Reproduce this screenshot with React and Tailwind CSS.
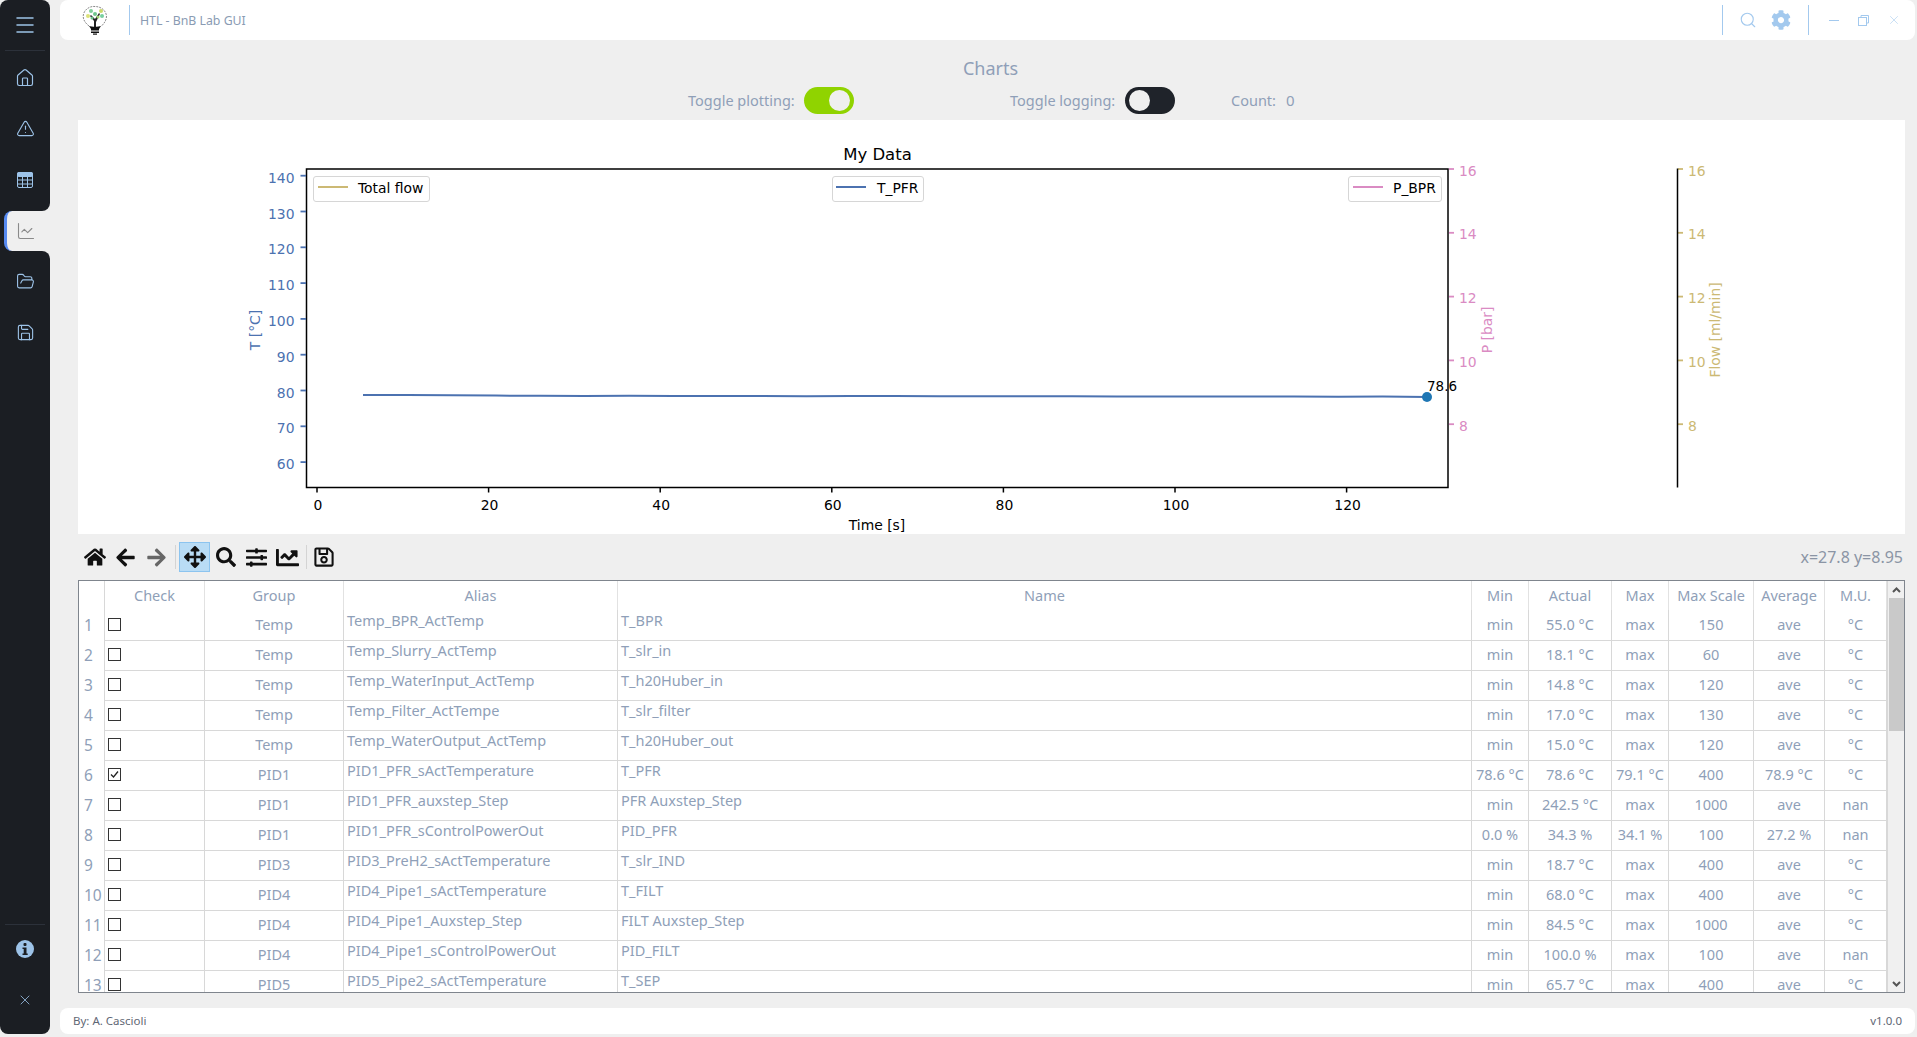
import React from 'react';
import { FaHome, FaArrowLeft, FaArrowRight, FaArrowsAlt, FaSearch, FaSlidersH, FaChartLine, FaRegSave, FaCog } from 'react-icons/fa';
import { Menu, Home, TriangleAlert, ChartLine, FolderOpen, Save, X, Search } from 'lucide-react';

const rows = [
  ['Temp', 'Temp_BPR_ActTemp', 'T_BPR', 'min', '55.0 °C', 'max', '150', 'ave', '°C'],
  ['Temp', 'Temp_Slurry_ActTemp', 'T_slr_in', 'min', '18.1 °C', 'max', '60', 'ave', '°C'],
  ['Temp', 'Temp_WaterInput_ActTemp', 'T_h20Huber_in', 'min', '14.8 °C', 'max', '120', 'ave', '°C'],
  ['Temp', 'Temp_Filter_ActTempe', 'T_slr_filter', 'min', '17.0 °C', 'max', '130', 'ave', '°C'],
  ['Temp', 'Temp_WaterOutput_ActTemp', 'T_h20Huber_out', 'min', '15.0 °C', 'max', '120', 'ave', '°C'],
  ['PID1', 'PID1_PFR_sActTemperature', 'T_PFR', '78.6 °C', '78.6 °C', '79.1 °C', '400', '78.9 °C', '°C'],
  ['PID1', 'PID1_PFR_auxstep_Step', 'PFR Auxstep_Step', 'min', '242.5 °C', 'max', '1000', 'ave', 'nan'],
  ['PID1', 'PID1_PFR_sControlPowerOut', 'PID_PFR', '0.0 %', '34.3 %', '34.1 %', '100', '27.2 %', 'nan'],
  ['PID3', 'PID3_PreH2_sActTemperature', 'T_slr_IND', 'min', '18.7 °C', 'max', '400', 'ave', '°C'],
  ['PID4', 'PID4_Pipe1_sActTemperature', 'T_FILT', 'min', '68.0 °C', 'max', '400', 'ave', '°C'],
  ['PID4', 'PID4_Pipe1_Auxstep_Step', 'FILT Auxstep_Step', 'min', '84.5 °C', 'max', '1000', 'ave', '°C'],
  ['PID4', 'PID4_Pipe1_sControlPowerOut', 'PID_FILT', 'min', '100.0 %', 'max', '100', 'ave', 'nan'],
  ['PID5', 'PID5_Pipe2_sActTemperature', 'T_SEP', 'min', '65.7 °C', 'max', '400', 'ave', '°C'],
];

const headers = ['', 'Check', 'Group', 'Alias', 'Name', 'Min', 'Actual', 'Max', 'Max Scale', 'Average', 'M.U.'];
const gridCols = 'grid grid-cols-[26px_100px_139px_274px_854px_57px_83px_57px_85px_71px_62px]';
const cell = 'flex items-center justify-center border-r border-[#d8d8d8] border-b whitespace-nowrap';

const BLUE = '#4c72b0';
const PINK = '#da8bc3';
const GOLD = '#ccb974';

const TableIcon = () => (
  <svg width="16" height="16" viewBox="0 0 16 16" fill="none" stroke="#9dc3e8" strokeWidth="1">
    <rect x="0.5" y="0.5" width="15" height="15" rx="1.5" />
    <rect x="0.5" y="0.5" width="15" height="4" rx="1" fill="#9dc3e8" />
    <path d="M0.5 8h15M0.5 12h15M5.5 4.5v11M10.5 4.5v11" />
  </svg>
);

const Logo = () => (
  <svg width="28" height="30" viewBox="0 0 28 30">
    <path d="M8 21C3 17 1.500 13 2.500 9 4 4 9 1 14 1.500c6 0 11 4 11.500 9.500 0 4-2 7-5 10" fill="none" stroke="#8a8a8a" strokeWidth="1" strokeDasharray="2 1" />
    <path d="M13 23v-7l-4-5 1-1 4 4 4-6 1 1-4 8v6z" fill="#222" />
    <path d="M8 21c3 1 9 1 12 0l-2 3h-8z" fill="#111" />
    <rect x="10" y="24" width="8" height="1.500" fill="#111" />
    <rect x="10" y="26.500" width="8" height="1.500" fill="#111" />
    <rect x="12" y="28.500" width="4" height="1.200" fill="#111" />
    <circle cx="10" cy="6" r="2" fill="#7fcf9a" />
    <circle cx="14" cy="9" r="2" fill="#6fc48c" />
    <circle cx="20" cy="6" r="2" fill="#cbd96a" />
    <circle cx="7" cy="11" r="2" fill="#dbe27a" />
    <circle cx="21" cy="11" r="2" fill="#78cfa0" />
    <circle cx="17" cy="12" r="1.500" fill="#9fd66f" />
    <circle cx="11" cy="13" r="1.500" fill="#6fc48c" />
  </svg>
);

const Chart = () => {
  const tTicks = [140, 130, 120, 110, 100, 90, 80, 70, 60];
  const rightTicks = [16, 14, 12, 10, 8];
  const xTicks = [0, 20, 40, 60, 80, 100, 120];
  const points = [];
  const ys = [395, 395, 395.3, 395.6, 395.8, 396, 395.8, 396, 396, 396.1, 396.2, 396, 396.1, 396.2, 396.3, 396.3, 396.3, 396.5, 396.4, 396.4, 396.6, 396.5, 396.7, 396.6, 397];
  ys.forEach((y, i) => points.push(`${363 + (i * 1064) / (ys.length - 1)},${y}`));
  const tY = (v) => 175.700 + (140 - v) * 3.580;
  const rY = (v) => 169 + (16 - v) * 31.900;

  return (
    <svg className="w-full h-full block" viewBox="78 120 1827 414" style={{ fontFamily: '"DejaVu Sans", sans-serif' }}>
      <text x="877.500" y="160" fontSize="16.500" textAnchor="middle" fill="#000">My Data</text>
      <rect x="306.500" y="169" width="1141.500" height="318.500" fill="none" stroke="#000" strokeWidth="1.500" />

      {tTicks.map((v) => (
        <g key={v}>
          <line x1="300.500" x2="306" y1={tY(v)} y2={tY(v)} stroke={BLUE} strokeWidth="1.800" />
          <text x="294.500" y={tY(v) + 7} fontSize="13.900" textAnchor="end" fill={BLUE}>{v}</text>
        </g>
      ))}
      <text transform="translate(260 330) rotate(-90)" fontSize="13.900" textAnchor="middle" fill={BLUE}>T [°C]</text>

      {xTicks.map((v) => (
        <g key={v}>
          <line x1={317 + v * 8.580} x2={317 + v * 8.580} y1="488" y2="492.500" stroke="#000" strokeWidth="1.500" />
          <text x={318 + v * 8.580} y="509.500" fontSize="13.900" textAnchor="middle" fill="#000">{v}</text>
        </g>
      ))}
      <text x="877" y="530" fontSize="13.900" textAnchor="middle" fill="#000">Time [s]</text>

      {rightTicks.map((v) => (
        <g key={v}>
          <line x1="1449" x2="1454" y1={rY(v)} y2={rY(v)} stroke={PINK} strokeWidth="1.800" />
          <text x="1459" y={rY(v) + 6.500} fontSize="13.900" fill={PINK}>{v}</text>
          <line x1="1678" x2="1683" y1={rY(v)} y2={rY(v)} stroke={GOLD} strokeWidth="1.800" />
          <text x="1688" y={rY(v) + 6.500} fontSize="13.900" fill={GOLD}>{v}</text>
        </g>
      ))}
      <text transform="translate(1492 330) rotate(-90)" fontSize="13.900" textAnchor="middle" fill={PINK}>P [bar]</text>
      <line x1="1677.500" x2="1677.500" y1="168.500" y2="487.500" stroke="#000" strokeWidth="1.500" />
      <text transform="translate(1720 330) rotate(-90)" fontSize="13.900" textAnchor="middle" fill={GOLD}>Flow [ml/min]</text>

      <polyline points={points.join(' ')} fill="none" stroke={BLUE} strokeWidth="2" />
      <circle cx="1427" cy="397" r="5" fill="#1f77b4" />
      <text x="1427" y="390.500" fontSize="13.500" fill="#000">78.6</text>

      <rect x="313.500" y="176.500" width="116" height="25" rx="2.500" fill="#fff" stroke="#d6d6d6" />
      <line x1="318" x2="348" y1="187" y2="187" stroke={GOLD} strokeWidth="2" />
      <text x="358" y="192.500" fontSize="13.900" fill="#000">Total flow</text>

      <rect x="832.500" y="176.500" width="91" height="25" rx="2.500" fill="#fff" stroke="#d6d6d6" />
      <line x1="836" x2="866" y1="187" y2="187" stroke={BLUE} strokeWidth="2" />
      <text x="877" y="192.500" fontSize="13.900" fill="#000">T_PFR</text>

      <rect x="1348.500" y="176.500" width="93" height="25" rx="2.500" fill="#fff" stroke="#d6d6d6" />
      <line x1="1353" x2="1383" y1="187" y2="187" stroke={PINK} strokeWidth="2" />
      <text x="1393" y="192.500" fontSize="13.900" fill="#000">P_BPR</text>
    </svg>
  );
};

const NavItem = ({ children }) => (
  <div className="h-[51px] flex items-center justify-center text-[#9dc3e8]">{children}</div>
);

const Checkbox = ({ checked }) => (
  <div className="w-[13px] h-[13px] border border-[#333] flex items-center justify-center bg-white">
    {checked && (
      <svg width="11" height="11" viewBox="0 0 11 11" fill="none" stroke="#222" strokeWidth="1.300">
        <path d="M2 5.500l2.500 2.500L9 2.500" />
      </svg>
    )}
  </div>
);

export default function App() {
  return (
    <div className="h-screen w-full overflow-hidden bg-[#efefef] flex text-[#8f9fb8]" style={{ fontFamily: '"Noto Sans", sans-serif' }}>
      {/* left menu */}
      <aside className="w-[50px] shrink-0 flex flex-col pb-[3px]">
        <div className="h-[211px] bg-[#1b1e23] rounded-t-lg rounded-br-lg">
          <div className="h-[51px] mx-[5px] border-b border-[#2c313a] flex items-center justify-center text-[#9dc3e8]">
            <Menu size={24} strokeWidth={1.500} />
          </div>
          <div className="h-px" />
          <NavItem><Home size={20} strokeWidth={1.400} /></NavItem>
          <NavItem><TriangleAlert size={19} strokeWidth={1.400} /></NavItem>
          <NavItem><TableIcon /></NavItem>
        </div>
        <div className="h-10 bg-[#1b1e23] pl-1">
          <div className="h-full bg-[#efefef] rounded-l-lg border-l-[3px] border-[#568af2] flex items-center justify-center pr-[6px] text-[#8a8a8a]">
            <ChartLine size={20} strokeWidth={1.300} />
          </div>
        </div>
        <div className="flex-1 bg-[#1b1e23] rounded-b-lg rounded-tr-lg flex flex-col">
          <div className="h-[5px]" />
          <NavItem><FolderOpen size={19} strokeWidth={1.400} /></NavItem>
          <NavItem><Save size={19} strokeWidth={1.400} /></NavItem>
          <div className="flex-1" />
          <div className="mx-[5px] border-t border-[#2c313a] h-[51px] pb-[2px] flex items-center justify-center">
            <svg width="18" height="18" viewBox="0 0 18 18">
              <circle cx="9" cy="9" r="9" fill="#9dc3e8" />
              <rect x="7.500" y="3" width="3" height="3" rx="1" fill="#1b1e23" />
              <path d="M6.500 7.500h4v6h1.200v1.500H6.500v-1.500h1.200V9H6.500z" fill="#1b1e23" />
            </svg>
          </div>
          <div className="h-[59px] flex items-center justify-center pb-[9px] text-[#9dc3e8]">
            <X size={16} strokeWidth={1.200} />
          </div>
        </div>
      </aside>

      <div className="flex-1 min-w-0 ml-[10px] mr-[2px] pb-[3px] flex flex-col">
        {/* title bar */}
        <header className="h-10 shrink-0 bg-white rounded-lg flex items-center">
          <div className="w-[69px] h-full flex items-center justify-center"><Logo /></div>
          <div className="w-px h-[30px] bg-[#a3c9ee]" />
          <span className="ml-[10px] pt-[2px] text-[12.300px] text-[#8a9bb3]">HTL - BnB Lab GUI</span>
          <div className="flex-1" />
          <div className="w-px h-[30px] bg-[#a3c9ee]" />
          <div className="w-[85px] flex items-center justify-center gap-[14px] pr-px text-[#a3c9ee]">
            <Search size={18} strokeWidth={1.500} />
            <FaCog size={20} />
          </div>
          <div className="w-px h-[30px] bg-[#a3c9ee]" />
          <div className="w-[106px] flex items-center pl-[20px] pr-[14px] justify-between text-[#a3c9ee]">
            <div className="w-[10px] h-px bg-[#a3c9ee]" />
            <svg width="11" height="11" viewBox="0 0 11 11" fill="none" stroke="#a3c9ee" strokeWidth="1">
              <rect x="0.500" y="2.500" width="8" height="8" />
              <path d="M3 2.500V0.500h7.500v7.500H8.500" />
            </svg>
            <X size={14} strokeWidth={1} />
          </div>
        </header>

        {/* page */}
        <main className="flex-1 min-h-0 pl-[18px] pr-[10px] flex flex-col">
          <h1 className="mt-[17px] h-[22px] leading-[22px] text-center text-[18px] font-normal text-[#8f9fb8] pr-[2px]">Charts</h1>
          <div className="mt-2 h-[27px] flex items-center pl-[610px] text-[14.500px]">
            <span className="w-[116px] whitespace-nowrap">Toggle plotting:</span>
            <div className="w-[50px] h-[27px] rounded-full bg-[#90d300] flex items-center justify-end pr-[4px]">
              <div className="w-[21px] h-[21px] rounded-full bg-[#efefef]" />
            </div>
            <span className="ml-[156px] w-[115px] whitespace-nowrap">Toggle logging:</span>
            <div className="w-[50px] h-[27px] rounded-full bg-[#1f232a] flex items-center pl-[4px]">
              <div className="w-[21px] h-[21px] rounded-full bg-[#efefef]" />
            </div>
            <span className="ml-[56px] whitespace-nowrap">Count:</span>
            <span className="ml-[10px] text-[15px]">0</span>
          </div>

          <section className="mt-[6px] h-[414px] shrink-0 bg-white">
            <Chart />
          </section>

          {/* matplotlib toolbar */}
          <div className="h-[46px] shrink-0 flex items-center text-[#111]">
            <div className="w-px" />
            <div className="w-[31px] flex justify-center"><FaHome size={22} /></div>
            <div className="w-[31px] flex justify-center"><FaArrowLeft size={21} /></div>
            <div className="w-[31px] flex justify-center text-[#666]"><FaArrowRight size={21} /></div>
            <div className="w-px h-[24px] bg-[#d4d4d4] mr-[3px] ml-[3px]" />
            <div className="w-[31px] h-[30px] flex items-center justify-center bg-[#b9dcf5] border border-[#8cc4ef]"><FaArrowsAlt size={22} /></div>
            <div className="w-[31px] flex justify-center"><FaSearch size={20} /></div>
            <div className="w-[31px] flex justify-center"><FaSlidersH size={21} /></div>
            <div className="w-[31px] flex justify-center"><FaChartLine size={23} /></div>
            <div className="w-px h-[24px] bg-[#d4d4d4] mx-[3px]" />
            <div className="w-[27px] flex justify-center"><FaRegSave size={22} /></div>
            <div className="flex-1" />
            <span className="text-[16px] text-[#8b95a5] pr-[2px]">x=27.8 y=8.95</span>
          </div>

          {/* data table */}
          <div className="h-[413px] shrink-0 border border-[#7f858d] bg-white flex overflow-hidden text-[14.500px]">
            <div className="w-[1808px] shrink-0">
              <div className={`${gridCols} h-[29px]`}>
                {headers.map((h, i) => (
                  <div key={i} className={`flex items-center justify-center whitespace-nowrap ${i > 0 ? 'border-r border-[#e2e2e2]' : 'border-r border-[#d8d8d8]'}`}>{h}</div>
                ))}
              </div>
              {rows.map((r, i) => (
                <div key={i} className={`${gridCols} h-[30px]`}>
                  <div className="flex items-center pl-[5px] text-[15.500px] border-r border-[#d8d8d8]">{i + 1}</div>
                  <div className={`${cell} justify-start! pl-[3px] pb-[1px]`}><Checkbox checked={i === 5} /></div>
                  <div className={cell}>{r[0]}</div>
                  <div className={`${cell} justify-start! pl-[3px] pb-[8px]`}>{r[1]}</div>
                  <div className={`${cell} justify-start! pl-[3px] pb-[8px]`}>{r[2]}</div>
                  {r.slice(3).map((v, j) => (
                    <div key={j} className={cell}>{v}</div>
                  ))}
                </div>
              ))}
            </div>
            <div className="flex-1 bg-[#f0f0f0] flex flex-col items-center border-l border-[#d8d8d8]">
              <div className="h-[17px] flex items-center justify-center">
                <svg width="9" height="6" viewBox="0 0 9 6" fill="none" stroke="#555" strokeWidth="2"><path d="M1 5l3.500-3.500L8 5" /></svg>
              </div>
              <div className="w-[15px] h-[133px] bg-[#c9c9c9]" />
              <div className="flex-1" />
              <div className="h-[17px] flex items-center justify-center">
                <svg width="9" height="6" viewBox="0 0 9 6" fill="none" stroke="#555" strokeWidth="2"><path d="M1 1l3.500 3.500L8 1" /></svg>
              </div>
            </div>
          </div>
        </main>

        {/* footer */}
        <footer className="mt-[15px] h-[26px] shrink-0 bg-white rounded-lg flex items-center justify-between px-[13px] text-[11.500px] text-[#5f6775]">
          <span>By: A. Cascioli</span>
          <span>v1.0.0</span>
        </footer>
      </div>
    </div>
  );
}
